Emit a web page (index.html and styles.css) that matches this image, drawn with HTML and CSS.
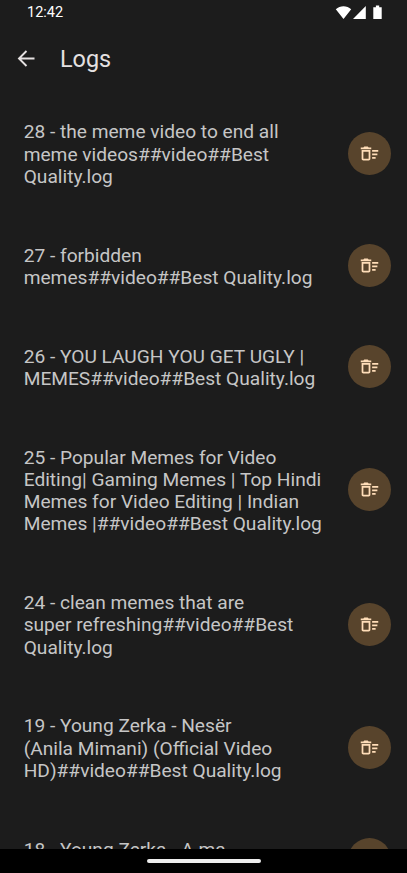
FILE: index.html
```html
<!DOCTYPE html>
<html lang="en">
<head>
<meta charset="utf-8">
<title>Logs</title>
<link rel="stylesheet" href="styles.css">
</head>
<body>
<svg width="0" height="0" class="defs"><defs>
<symbol id="sweep" viewBox="0 0 24 24"><path d="M15 16h4v2h-4zM15 8h7v2h-7zM15 12h6v2h-6zM3 18c0 1.100.9 2 2 2h6c1.100 0 2-.9 2-2V8H3v10zm2-8h6v8H5v-8zM10 4H6L5 5H2v2h12V5h-3z"/></symbol>
</defs></svg>
<div class="screen">
  <header class="status">
    <span class="time">12:42</span>
    <svg class="signals" width="48" height="16" viewBox="0 0 48 16"><path d="M.8 4.200C5.200.200 11.800.200 16.200 4.200L8.500 14zM18 14 30.800 1v13zM38.300 14V2.200h2.600V.6h3.300v1.600h2.500V14z"/></svg>
  </header>
  <div class="appbar">
    <svg class="back" width="24" height="24" viewBox="0 0 24 24"><path d="M20.500 11.500H5M12.500 4 5 11.500l7.500 7.500"/></svg>
    <h1>Logs</h1>
  </div>
  <main class="list">
    <div class="row"><p>28 - the meme video to end all<br>meme videos##video##Best<br>Quality.log</p><div class="del"><svg><use href="#sweep"/></svg></div></div>
    <div class="row"><p>27 - forbidden<br>memes##video##Best Quality.log</p><div class="del"><svg><use href="#sweep"/></svg></div></div>
    <div class="row"><p>26 - YOU LAUGH YOU GET UGLY |<br>MEMES##video##Best Quality.log</p><div class="del"><svg><use href="#sweep"/></svg></div></div>
    <div class="row"><p>25 - Popular Memes for Video<br>Editing| Gaming Memes | Top Hindi<br>Memes for Video Editing | Indian<br>Memes |##video##Best Quality.log</p><div class="del"><svg><use href="#sweep"/></svg></div></div>
    <div class="row"><p>24 - clean memes that are<br>super refreshing##video##Best<br>Quality.log</p><div class="del"><svg><use href="#sweep"/></svg></div></div>
    <div class="row"><p>19 - Young Zerka - Nesër<br>(Anila Mimani) (Official Video<br>HD)##video##Best Quality.log</p><div class="del"><svg><use href="#sweep"/></svg></div></div>
    <div class="row"><p>18 - Young Zerka - A ma<br>&nbsp;</p><div class="del"><svg><use href="#sweep"/></svg></div></div>
  </main>
  <footer class="nav"><div class="pill"></div></footer>
</div>
</body>
</html>
```
FILE: styles.css
```css
* { box-sizing: border-box; }
body { margin: 0; background: #1c1c1c; font-family: Roboto, sans-serif; overflow: hidden; }
.defs { display: block; height: 0; }
.screen { width: 407px; height: 873px; display: flex; flex-direction: column; }
.status { height: 26px; flex: none; display: flex; justify-content: space-between; align-items: center; padding: 0 24px 0 27px; color: #fff; }
.time { font-size: 14.500px; line-height: 18px; }
.signals { fill: #fff; }
.appbar { height: 66px; flex: none; display: flex; align-items: center; padding-left: 14px; gap: 22px; }
.back { fill: none; stroke: #e5e1e1; stroke-width: 1.900; }
h1 { margin: 0; font-size: 23.400px; font-weight: 400; line-height: 30px; color: #e5e1e1; }
.list { flex: 1; min-height: 0; overflow: hidden; }
.row { display: flex; align-items: center; justify-content: space-between; padding: 28.200px 16px 28.200px 23.700px; }
p { margin: 0; padding-top: 1.200px; margin-bottom: -1.200px; font-size: 19.150px; line-height: 22.300px; color: #c6c6c6; white-space: nowrap; }
.del { flex: none; width: 43px; height: 43px; border-radius: 50%; background: #58442c; display: flex; align-items: center; justify-content: center; }
.del svg { width: 21px; height: 21px; fill: #ffddb8; }
.nav { height: 24px; flex: none; background: #000; display: flex; align-items: center; justify-content: center; }
.pill { width: 114px; height: 4px; border-radius: 2px; background: #ededed; }
```
